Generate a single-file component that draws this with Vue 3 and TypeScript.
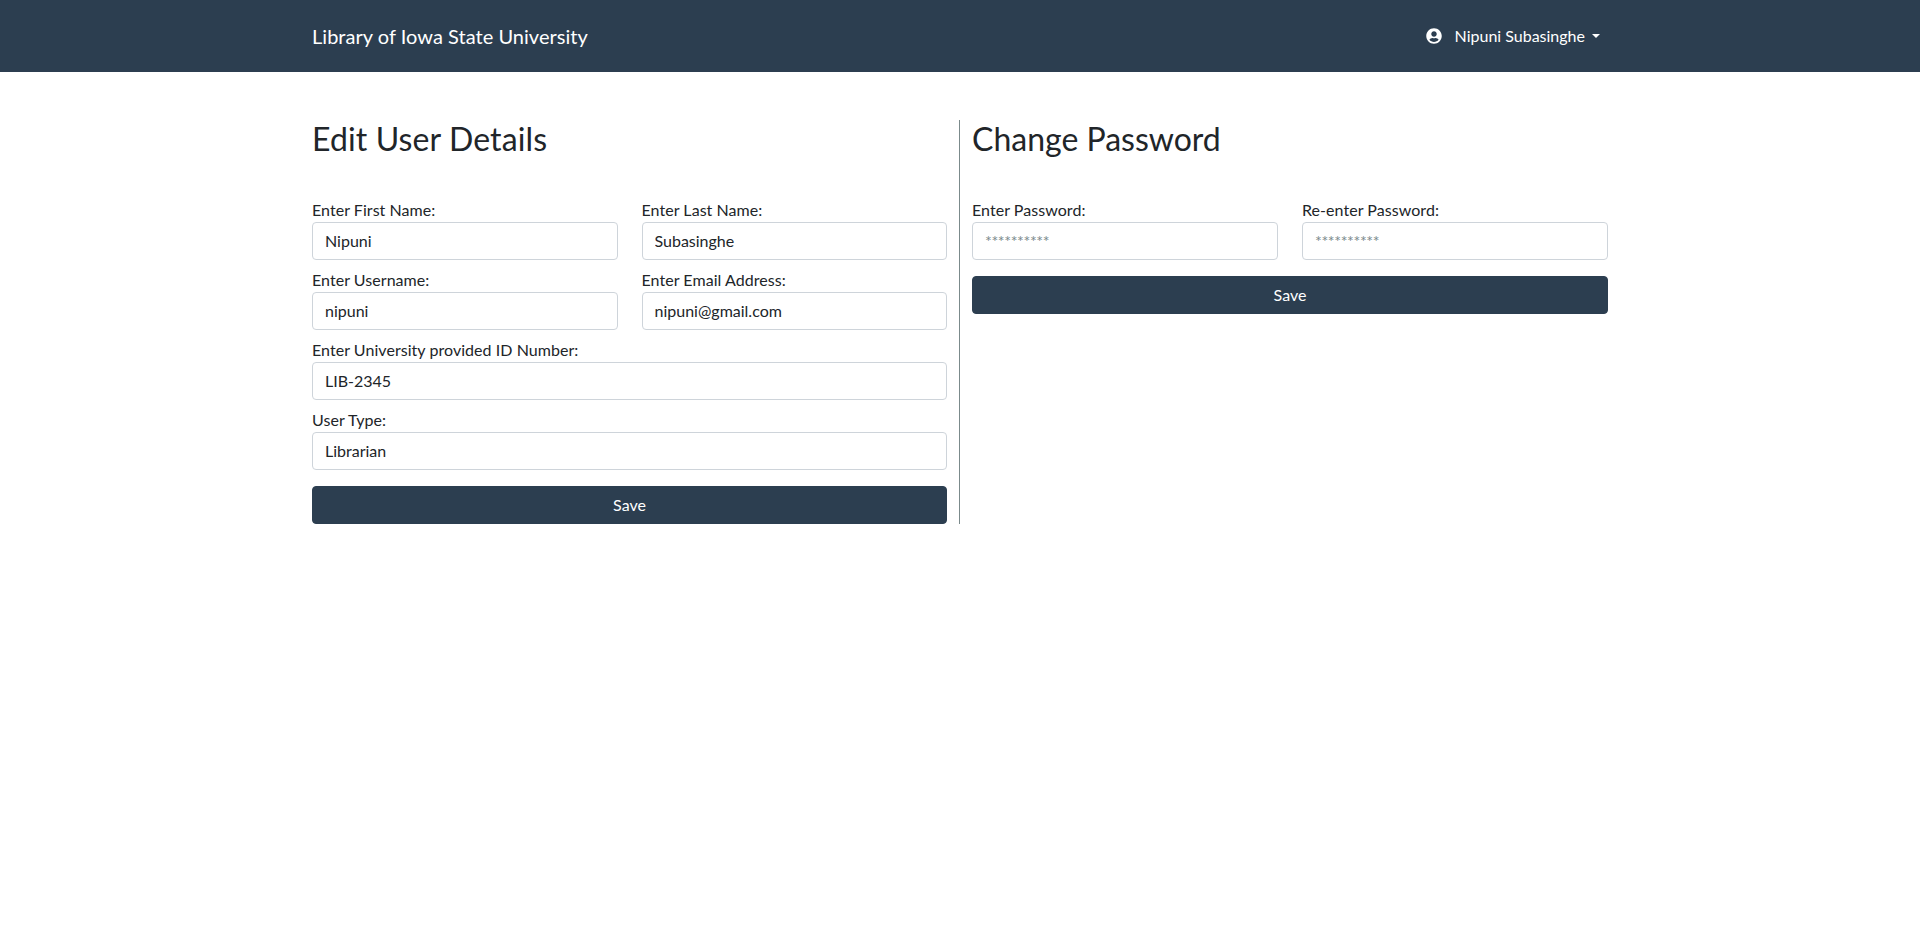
<script setup lang="ts">
import { ref } from 'vue'

interface Field {
  id: string
  label: string
  value: string
  type: string
  wide?: boolean
  placeholder?: string
}

const details = ref<Field[]>([
  { id: 'first-name', label: 'Enter First Name:', value: 'Nipuni', type: 'text' },
  { id: 'last-name', label: 'Enter Last Name:', value: 'Subasinghe', type: 'text' },
  { id: 'username', label: 'Enter Username:', value: 'nipuni', type: 'text' },
  { id: 'email', label: 'Enter Email Address:', value: 'nipuni@gmail.com', type: 'email' },
  { id: 'university-id', label: 'Enter University provided ID Number:', value: 'LIB-2345', type: 'text', wide: true },
  { id: 'user-type', label: 'User Type:', value: 'Librarian', type: 'text', wide: true },
])

const passwords = ref<Field[]>([
  { id: 'password', label: 'Enter Password:', value: '', type: 'password', placeholder: '**********' },
  { id: 'password-repeat', label: 'Re-enter Password:', value: '', type: 'password', placeholder: '**********' },
])
</script>

<template>
  <header class="navbar">
    <div class="container nav-inner">
      <a class="brand">Library of Iowa State University</a>
      <a class="account">
        <svg class="account-icon" viewBox="0 0 496 512" aria-hidden="true">
          <path
            fill="currentColor"
            d="M248 8C111 8 0 119 0 256s111 248 248 248 248-111 248-248S385 8 248 8zm0 96c48.600 0 88 39.400 88 88s-39.400 88-88 88-88-39.400-88-88 39.400-88 88-88zm0 344c-58.700 0-111.300-26.600-146.500-68.200 18.800-35.400 55.600-59.800 98.500-59.800 2.400 0 4.800.4 7.100 1.100 13 4.200 26.600 6.900 40.900 6.900 14.300 0 28-2.700 40.900-6.900 2.300-.7 4.700-1.100 7.100-1.100 42.900 0 79.700 24.400 98.500 59.800C359.300 421.400 306.700 448 248 448z"
          />
        </svg>
        <span>Nipuni Subasinghe</span>
        <span class="caret"></span>
      </a>
    </div>
  </header>

  <main class="container panels">
    <section class="panel panel-details">
      <h2>Edit User Details</h2>
      <form @submit.prevent>
        <div class="fields">
          <div v-for="f in details" :key="f.id" class="field" :class="{ wide: f.wide }">
            <label :for="f.id">{{ f.label }}</label>
            <input :id="f.id" v-model="f.value" :type="f.type" />
          </div>
        </div>
        <button type="submit">Save</button>
      </form>
    </section>

    <section class="panel panel-password">
      <h2>Change Password</h2>
      <form @submit.prevent>
        <div class="fields">
          <div v-for="f in passwords" :key="f.id" class="field">
            <label :for="f.id">{{ f.label }}</label>
            <input :id="f.id" v-model="f.value" :type="f.type" :placeholder="f.placeholder" autocomplete="new-password" />
          </div>
        </div>
        <button type="submit">Save</button>
      </form>
    </section>
  </main>
</template>

<style>
body {
  margin: 0;
  background: #fff;
  color: #212529;
  font-family: Lato, "Liberation Sans", sans-serif;
  font-size: 16px;
  line-height: 1.5;
}
</style>

<style scoped>
* {
  box-sizing: border-box;
}

.container {
  width: 100%;
  max-width: 1320px;
  margin: 0 auto;
  padding: 0 12px;
}

.navbar {
  height: 72px;
  background: #2c3e50;
  color: #fff;
}

.nav-inner {
  display: flex;
  align-items: center;
  justify-content: space-between;
  height: 100%;
}

.brand {
  font-size: 20px;
  line-height: 30px;
  letter-spacing: 0.03px;
}

.account {
  display: flex;
  align-items: center;
  padding: 8px;
  cursor: pointer;
}

.account-icon {
  width: 16px;
  height: 16px;
  margin-right: 13px;
}

.caret {
  margin-left: 7px;
  border-top: 4.8px solid;
  border-right: 4.8px solid transparent;
  border-left: 4.8px solid transparent;
}

.panels {
  display: grid;
  grid-template-columns: 1fr 1fr;
  align-items: start;
  padding-top: 48px;
}

.panel-details {
  padding-right: 12px;
  border-right: 1px solid #7b8a8b;
}

.panel-details h2 {
  letter-spacing: 0.12px;
}

.panel-password {
  padding-left: 12px;
}

h2 {
  height: 38px;
  margin: 0 0 40px;
  font-size: 32px;
  font-weight: 400;
  line-height: 38.4px;
}

.fields {
  display: grid;
  grid-template-columns: 1fr 1fr;
  gap: 8px 24px;
}

.field {
  min-width: 0;
}

.wide {
  grid-column: 1 / -1;
}

label {
  display: block;
  letter-spacing: 0.05px;
}

input {
  display: block;
  width: 100%;
  height: 38px;
  padding: 5px 12px 7px;
  border: 1px solid #ced4da;
  border-radius: 4px;
  background: #fff;
  color: #212529;
  font: inherit;
}

input::placeholder {
  color: #7b8a8b;
  letter-spacing: -0.38px;
  opacity: 1;
}

button {
  display: block;
  width: 100%;
  height: 38px;
  margin-top: 16px;
  padding: 6px 12px;
  border: 1px solid #2c3e50;
  border-radius: 4px;
  background: #2c3e50;
  color: #fff;
  font: inherit;
  cursor: pointer;
}
</style>
